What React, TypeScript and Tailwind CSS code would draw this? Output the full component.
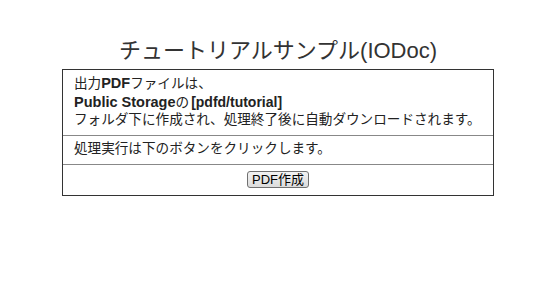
const jp = '"Liberation Sans", "Noto Sans CJK JP", sans-serif';

export default function App() {
  return (
    <div className="min-h-screen bg-white pt-[36px] pl-[62px]" style={{ fontFamily: jp }}>
      <div className="w-[432px]">
        {/* Title */}
        <h1 className="text-center text-[22px] leading-[30px] text-[#333]">チュートリアルサンプル(IODoc)</h1>

        {/* Box */}
        <div className="mt-[3px] border border-[#333] text-[13.6px] text-[#222]">
          <div className="pl-[11px] pr-[4px] pt-[4px] pb-[5px] whitespace-nowrap">
            <div className="h-[18.5px] leading-[18.5px]">
              出力<span className="font-bold text-[14.5px]">PDF</span>ファイルは、
            </div>
            <div className="h-[18.5px] leading-[18.5px]">
              <span className="font-bold text-[14.5px]">Public Storage</span>の
              <span className="font-bold text-[14px] ml-[2px]">[pdfd/tutorial]</span>
            </div>
            <div className="h-[18.5px] leading-[18.5px]">フォルダ下に作成され、処理終了後に自動ダウンロードされます。</div>
          </div>
          <div className="border-t border-[#888] px-[11px] h-[29px] flex items-center">
            処理実行は下のボタンをクリックします。
          </div>
          <div className="border-t border-[#888] h-[31px] flex items-center justify-center">
            <button className="h-[17px] px-[4px] rounded-[3px] border border-[#707070] bg-gradient-to-b from-[#f2f2f2] to-[#dcdcdc] text-[13px] leading-[15px] text-black">
              PDF作成
            </button>
          </div>
        </div>
      </div>
    </div>
  );
}
